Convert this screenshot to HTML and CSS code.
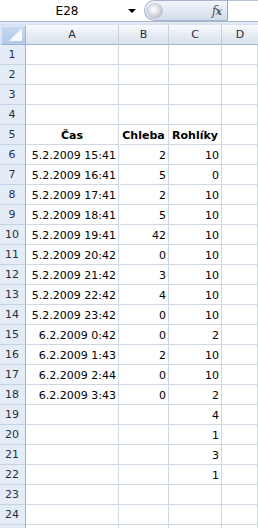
FILE: index.html
```html
<!DOCTYPE html>
<html>
<head>
<meta charset="utf-8">
<link rel="stylesheet" href="styles.css">
</head>
<body>
<div class="toolbar">
  <div class="namebox"><span class="ref">E28</span><span class="arrow"></span></div>
  <div class="pill"><span class="knob"></span><span class="fx"><i>f</i><i class="x">x</i></span></div>
  <div class="formula"></div>
</div>
<div class="strip"></div>
<div class="sheet">
  <div class="ch corner"><span class="tri"></span></div>
  <div class="ch">A</div><div class="ch">B</div><div class="ch">C</div><div class="ch last">D</div>

  <div class="rh">1</div><div class="c"></div><div class="c"></div><div class="c"></div><div class="c"></div>
  <div class="rh">2</div><div class="c"></div><div class="c"></div><div class="c"></div><div class="c"></div>
  <div class="rh">3</div><div class="c"></div><div class="c"></div><div class="c"></div><div class="c"></div>
  <div class="rh">4</div><div class="c"></div><div class="c"></div><div class="c"></div><div class="c"></div>
  <div class="rh">5</div><div class="c b">Čas</div><div class="c b">Chleba</div><div class="c b">Rohlíky</div><div class="c"></div>
  <div class="rh">6</div><div class="c r">5.2.2009 15:41</div><div class="c r">2</div><div class="c r">10</div><div class="c"></div>
  <div class="rh">7</div><div class="c r">5.2.2009 16:41</div><div class="c r">5</div><div class="c r">0</div><div class="c"></div>
  <div class="rh">8</div><div class="c r">5.2.2009 17:41</div><div class="c r">2</div><div class="c r">10</div><div class="c"></div>
  <div class="rh">9</div><div class="c r">5.2.2009 18:41</div><div class="c r">5</div><div class="c r">10</div><div class="c"></div>
  <div class="rh">10</div><div class="c r">5.2.2009 19:41</div><div class="c r">42</div><div class="c r">10</div><div class="c"></div>
  <div class="rh">11</div><div class="c r">5.2.2009 20:42</div><div class="c r">0</div><div class="c r">10</div><div class="c"></div>
  <div class="rh">12</div><div class="c r">5.2.2009 21:42</div><div class="c r">3</div><div class="c r">10</div><div class="c"></div>
  <div class="rh">13</div><div class="c r">5.2.2009 22:42</div><div class="c r">4</div><div class="c r">10</div><div class="c"></div>
  <div class="rh">14</div><div class="c r">5.2.2009 23:42</div><div class="c r">0</div><div class="c r">10</div><div class="c"></div>
  <div class="rh">15</div><div class="c r">6.2.2009 0:42</div><div class="c r">0</div><div class="c r">2</div><div class="c"></div>
  <div class="rh">16</div><div class="c r">6.2.2009 1:43</div><div class="c r">2</div><div class="c r">10</div><div class="c"></div>
  <div class="rh">17</div><div class="c r">6.2.2009 2:44</div><div class="c r">0</div><div class="c r">10</div><div class="c"></div>
  <div class="rh">18</div><div class="c r">6.2.2009 3:43</div><div class="c r">0</div><div class="c r">2</div><div class="c"></div>
  <div class="rh">19</div><div class="c"></div><div class="c"></div><div class="c r">4</div><div class="c"></div>
  <div class="rh">20</div><div class="c"></div><div class="c"></div><div class="c r">1</div><div class="c"></div>
  <div class="rh">21</div><div class="c"></div><div class="c"></div><div class="c r">3</div><div class="c"></div>
  <div class="rh">22</div><div class="c"></div><div class="c"></div><div class="c r">1</div><div class="c"></div>
  <div class="rh">23</div><div class="c"></div><div class="c"></div><div class="c"></div><div class="c"></div>
  <div class="rh">24</div><div class="c"></div><div class="c"></div><div class="c"></div><div class="c"></div>
  <div class="rh"></div><div class="c"></div><div class="c"></div><div class="c"></div><div class="c"></div>
</div>
</body>
</html>
```
FILE: styles.css
```css
* { box-sizing: border-box; }
html, body { margin: 0; padding: 0; }
body {
  width: 258px;
  height: 528px;
  overflow: hidden;
  background: #fff;
  font-family: "DejaVu Sans", Verdana, sans-serif;
  font-size: 11px;
  color: #000;
}
.toolbar {
  display: flex;
  height: 22px;
  border-bottom: 1px solid #a9b8cb;
  background: #fff;
}
.namebox {
  width: 144px;
  display: flex;
  align-items: center;
  position: relative;
}
.ref {
  flex: 1;
  text-align: center;
  font-family: "DejaVu Sans", sans-serif;
  font-size: 12px;
  padding-left: 6px;
  color: #000;
}
.arrow {
  width: 0; height: 0;
  border-left: 4px solid transparent;
  border-right: 4px solid transparent;
  border-top: 4px solid #000;
  margin-right: 8px;
  margin-top: 1px;
}
.pill {
  width: 84px;
  height: 21px;
  border: 1px solid #a3b5cc;
  border-right: 1px solid #8ea4bf;
  border-radius: 11px 0 0 11px;
  background: linear-gradient(#f3f6fb, #dfe7f2 55%, #d3deec);
  display: flex;
  align-items: center;
  justify-content: space-between;
  padding: 0 4px 0 3px;
}
.knob {
  width: 14px; height: 14px;
  border-radius: 50%;
  background: radial-gradient(circle at 40% 40%, #ffffff, #d5d9df 50%, #9ba4b0);
  box-shadow: 0 0 0 1px #c3ccd8;
}
.fx {
  font-family: "DejaVu Serif", "Liberation Serif", serif;
  font-style: italic;
  font-size: 13px;
  color: #555d66;
  letter-spacing: -1px;
  padding-right: 2px;
}
.fx i { font-style: italic; }
.fx .x { font-size: 11px; font-weight: bold; }
.formula {
  flex: 1;
  border-top: 1px solid #b7c5d6;
  background: #fff;
}
.strip {
  height: 3px;
  background: linear-gradient(#e6edf6, #d3dff0);
}
.sheet {
  display: grid;
  grid-template-columns: 26px 93px 50px 53px 36px;
  grid-template-rows: 20px;
  grid-auto-rows: 20px;
}
.ch {
  background: linear-gradient(#f9fbfd, #e4eaf2 60%, #dbe3ee);
  border-right: 1px solid #c3cfdd;
  border-bottom: 1px solid #9eb6ce;
  color: #1f2d3d;
  text-align: center;
  line-height: 19px;
  font-size: 11px;
}
.ch.last { border-right: none; }
.corner {
  background: linear-gradient(#c6d8f1, #b2c9ea);
  border-right: 1px solid #9eb6ce;
  border-left: 2px solid #dbe6f5;
  border-top: 2px solid #dbe6f5;
  position: relative;
}
.tri {
  position: absolute;
  right: 3px;
  bottom: 3px;
  width: 0; height: 0;
  border-left: 13px solid transparent;
  border-bottom: 13px solid #f7fafe;
}
.rh {
  background: #e4ecf7;
  border-right: 1px solid #9eb6ce;
  border-bottom: 1px solid #c5d3e6;
  color: #27313f;
  text-align: center;
  line-height: 20px;
  font-size: 11px;
  padding-right: 1px;
}
.c {
  border-right: 1px solid #d0d7e5;
  border-bottom: 1px solid #d0d7e5;
  line-height: 21px;
  white-space: nowrap;
  overflow: hidden;
  padding: 0 2px;
}
.c.r { text-align: right; }
.c.b { text-align: center; font-weight: bold; padding: 0; }
```
